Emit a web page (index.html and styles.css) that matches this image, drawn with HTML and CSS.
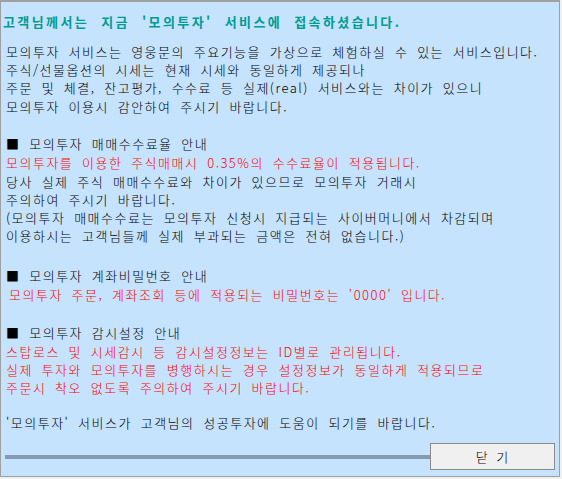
FILE: index.html
```html
<!DOCTYPE html>
<html lang="ko">
<head>
<meta charset="utf-8">
<link rel="stylesheet" href="styles.css">
</head>
<body>
<div class="panel">
  <div class="title">고객님께서는 지금 '모의투자' 서비스에 접속하셨습니다.</div>
  <div class="content">
    <div class="block first">
      <div>모의투자 서비스는 영웅문의 주요기능을 가상으로 체험하실 수 있는 서비스입니다.</div>
      <div>주식/선물옵션의 시세는 현재 시세와 동일하게 제공되나</div>
      <div>주문 및 체결, 잔고평가, 수수료 등 실제(real) 서비스와는 차이가 있으니</div>
      <div>모의투자 이용시 감안하여 주시기 바랍니다.</div>
    </div>
    <div class="block sec">
      <div class="head">■ 모의투자 매매수수료율 안내</div>
      <div class="red">모의투자를 이용한 주식매매시 0.35%의 수수료율이 적용됩니다.</div>
      <div>당사 실제 주식 매매수수료와 차이가 있으므로 모의투자 거래시</div>
      <div>주의하여 주시기 바랍니다.</div>
      <div>(모의투자 매매수수료는 모의투자 신청시 지급되는 사이버머니에서 차감되며</div>
      <div>이용하시는 고객님들께 실제 부과되는 금액은 전혀 없습니다.)</div>
    </div>
    <div class="block sec wide">
      <div class="head">■ 모의투자 계좌비밀번호 안내</div>
      <div class="red indent">모의투자 주문, 계좌조회 등에 적용되는 비밀번호는 '0000' 입니다.</div>
    </div>
    <div class="block sec">
      <div class="head">■ 모의투자 감시설정 안내</div>
      <div class="red">스탑로스 및 시세감시 등 감시설정정보는 ID별로 관리됩니다.</div>
      <div class="red">실제 투자와 모의투자를 병행하시는 경우 설정정보가 동일하게 적용되므로</div>
      <div class="red">주문시 착오 없도록 주의하여 주시기 바랍니다.</div>
    </div>
    <div class="block sec last">
      <div>'모의투자' 서비스가 고객님의 성공투자에 도움이 되기를 바랍니다.</div>
    </div>
  </div>
  <div class="footer">
    <div class="bar"></div>
    <button class="close">닫 기</button>
  </div>
</div>
</body>
</html>
```

FILE: styles.css
```css
html, body {
  margin: 0;
  padding: 0;
  background: #f0f0f0;
}
body {
  width: 562px;
  height: 479px;
  overflow: hidden;
  font-family: "Noto Sans CJK KR", "Noto Sans", sans-serif;
}
.panel {
  box-sizing: border-box;
  width: 560px;
  height: 477px;
  background: #c6e3fe;
  border: 1px solid #a0a0a0;
  border-top-width: 2px;
  display: flex;
  flex-direction: column;
}
.title {
  margin: 11px 0 0 2px;
  height: 18px;
  line-height: 18px;
  font-size: 13px;
  font-weight: bold;
  color: #009c8f;
  letter-spacing: 2.4px;
  word-spacing: 6px;
  white-space: nowrap;
}
.content {
  padding-left: 5px;
  font-size: 13px;
  font-weight: 300;
  line-height: 18.2px;
  letter-spacing: 1.5px;
  word-spacing: 3.6px;
  color: #000;
  white-space: nowrap;
}
.block.first {
  margin-top: 12px;
}
.block.sec {
  margin-top: 19.4px;
}
.block.sec.wide {
  margin-top: 21.5px;
}
.block.sec.last {
  margin-top: 16px;
}
.head {
  margin-bottom: 1px;
}
.red {
  color: #ff0000;
}
.indent {
  padding-left: 3px;
}
.footer {
  margin-top: auto;
  margin-bottom: 6px;
  padding: 0 4px 0 4px;
  display: flex;
  align-items: center;
}
.bar {
  flex: 1;
  height: 4px;
  background: #8599b3;
}
.close {
  box-sizing: border-box;
  width: 125px;
  height: 27px;
  margin: 0;
  padding: 0;
  background: #f0f0f0;
  border: 1px solid #8a8a8a;
  border-radius: 0;
  font-family: "Noto Sans CJK KR", sans-serif;
  font-size: 13px;
  font-weight: 300;
  color: #000;
  letter-spacing: 1px;
  word-spacing: 3px;
}
```
